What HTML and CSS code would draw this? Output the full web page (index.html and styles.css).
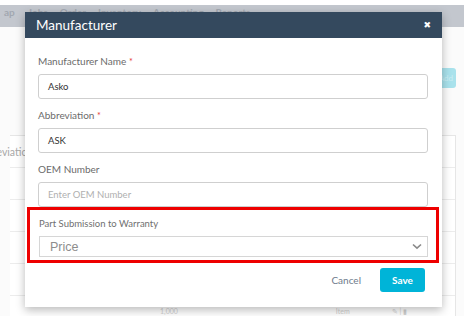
FILE: index.html
```html
<!DOCTYPE html>
<html lang="en">
<head>
    <meta charset="UTF-8">
    <meta name="viewport" content="width=device-width, initial-scale=1.0">
    <title>Manufacturer</title>
    <link rel="stylesheet" href="styles.css">
</head>
<body>
    <div class="page">
        <div class="top-strip"></div>
        <div class="navbar">
            <span class="nav-item nav-first">ap</span>
            <span class="nav-item">Jobs</span>
            <span class="nav-item">Order</span>
            <span class="nav-item">Inventory</span>
            <span class="nav-item">Accounting</span>
            <span class="nav-item">Reports</span>
        </div>
        <div class="toolbar">
            <div class="add-btn">Add</div>
        </div>
        <div class="list-card">
            <div class="list-row list-head"><span class="col-abbr">Abbreviation</span></div>
            <div class="list-row"></div>
            <div class="list-row"></div>
            <div class="list-row"></div>
            <div class="list-row"></div>
            <div class="list-row list-last">
                <span class="cell-dots">1,000</span>
                <span class="cell-type">Item</span>
                <span class="cell-icons">&#9998; | &#9646;</span>
            </div>
        </div>
    </div>

    <div class="modal">
        <div class="modal-header">
            <span class="modal-title">Manufacturer</span>
            <span class="modal-close">&#10006;</span>
        </div>
        <div class="modal-body">
            <div class="form-group">
                <label class="form-label">Manufacturer Name <span class="req">*</span></label>
                <div class="form-input">Asko</div>
            </div>
            <div class="form-group">
                <label class="form-label">Abbreviation <span class="req">*</span></label>
                <div class="form-input">ASK</div>
            </div>
            <div class="form-group">
                <label class="form-label">OEM Number</label>
                <div class="form-input placeholder">Enter OEM Number</div>
            </div>
            <div class="highlight">
                <label class="form-label">Part Submission to Warranty</label>
                <div class="form-select">
                    <span>Price</span>
                    <svg class="chevron" width="10" height="7" viewBox="0 0 10 7">
                        <path d="M1 1.5 L5 5.2 L9 1.5" fill="none" stroke="#8a8a8a" stroke-width="1.6"/>
                    </svg>
                </div>
            </div>
        </div>
        <div class="modal-footer">
            <span class="btn-cancel">Cancel</span>
            <span class="btn-save">Save</span>
        </div>
    </div>
</body>
</html>
```

FILE: styles.css
```css
body {
    margin: 0;
    width: 464px;
    height: 316px;
    overflow: hidden;
    position: relative;
    background-color: #fbfbfb;
    font-family: 'Lato', 'Liberation Sans', sans-serif;
}

.top-strip {
    height: 5px;
    background-color: #ffffff;
}

.navbar {
    height: 22px;
    background-color: #c3c7ce;
    display: flex;
    align-items: flex-start;
    padding-top: 1px;
    box-sizing: border-box;
}

.nav-item {
    font-size: 10px;
    font-weight: bold;
    color: #a2a8b1;
    margin-right: 12px;
}

.nav-first {
    margin-left: 4px;
    margin-right: 13px;
}

.toolbar {
    height: 108px;
    display: flex;
    justify-content: flex-end;
    align-items: flex-start;
    padding-right: 8px;
    box-sizing: border-box;
}

.add-btn {
    margin-top: 41px;
    width: 30px;
    height: 20px;
    border-radius: 3px;
    background-color: #a9e2ec;
    color: #c9eef4;
    font-size: 8px;
    line-height: 20px;
    text-align: right;
    padding-right: 3px;
    box-sizing: border-box;
}

.list-card {
    margin: 0 8px 0 10px;
    border-top: 1px solid #e6e6e6;
    border-right: 1px solid #e6e6e6;
    background-color: #ffffff;
}

.list-row {
    height: 31px;
    border-bottom: 1px solid #ececec;
    position: relative;
}

.col-abbr {
    display: block;
    margin-left: -36px;
    padding-top: 10px;
    font-size: 10.5px;
    color: #a8a8a8;
}

.list-last {
    border-bottom: none;
    display: flex;
    align-items: flex-start;
    padding-top: 11px;
    box-sizing: border-box;
    font-size: 7px;
    color: #d0d0d0;
}

.cell-dots {
    margin-left: 150px;
}

.cell-type {
    margin-left: 158px;
}

.cell-icons {
    margin-left: 42px;
}

/* modal */
.modal {
    position: absolute;
    left: 25px;
    top: 12px;
    width: 417px;
    height: 295px;
    background-color: #ffffff;
    box-shadow: 0 3px 9px rgba(0, 0, 0, 0.28);
}

.modal-header {
    height: 26px;
    background-color: #34495e;
    display: flex;
    align-items: center;
    justify-content: space-between;
    padding: 0 11px;
}

.modal-title {
    color: #ffffff;
    font-size: 13.5px;
}

.modal-close {
    color: #ffffff;
    font-family: 'DejaVu Sans', sans-serif;
    font-size: 9px;
    font-weight: bold;
}

.modal-body {
    padding: 16px 14px 0 13px;
}

.form-group {
    margin-bottom: 9px;
}

.form-label {
    display: block;
    height: 14px;
    line-height: 14px;
    margin-bottom: 6px;
    font-size: 10px;
    color: #6b6b6b;
}

.req {
    color: #e53935;
    font-size: 9px;
}

.form-input {
    height: 25px;
    border: 1px solid #cfcfcf;
    border-radius: 3px;
    box-sizing: border-box;
    padding-left: 9px;
    font-size: 9.5px;
    line-height: 23px;
    color: #333333;
}

.form-input.placeholder {
    color: #b0b0b0;
}

.highlight {
    margin: -9px -11px 0 -11px;
    border: 3px solid #ee0000;
    padding: 7px 8px 3px 9px;
}

.highlight .form-label {
    margin-bottom: 5px;
    font-size: 9.5px;
    color: #707070;
}

.form-select {
    height: 21px;
    border: 1px solid #d6d6d6;
    box-sizing: border-box;
    display: flex;
    align-items: center;
    justify-content: space-between;
    padding: 0 5px 0 10px;
    font-family: 'Liberation Sans', Arial, sans-serif;
    font-size: 12.5px;
    color: #8d8d8d;
}

.modal-footer {
    display: flex;
    justify-content: flex-end;
    align-items: center;
    padding: 5px 17px 0 0;
}

.btn-cancel {
    font-size: 10px;
    color: #6e7b8b;
    margin-right: 19px;
}

.btn-save {
    width: 45px;
    height: 24px;
    line-height: 24px;
    text-align: center;
    border-radius: 3px;
    background-color: #00b4d8;
    color: #ffffff;
    font-size: 10px;
    font-weight: bold;
}
```
